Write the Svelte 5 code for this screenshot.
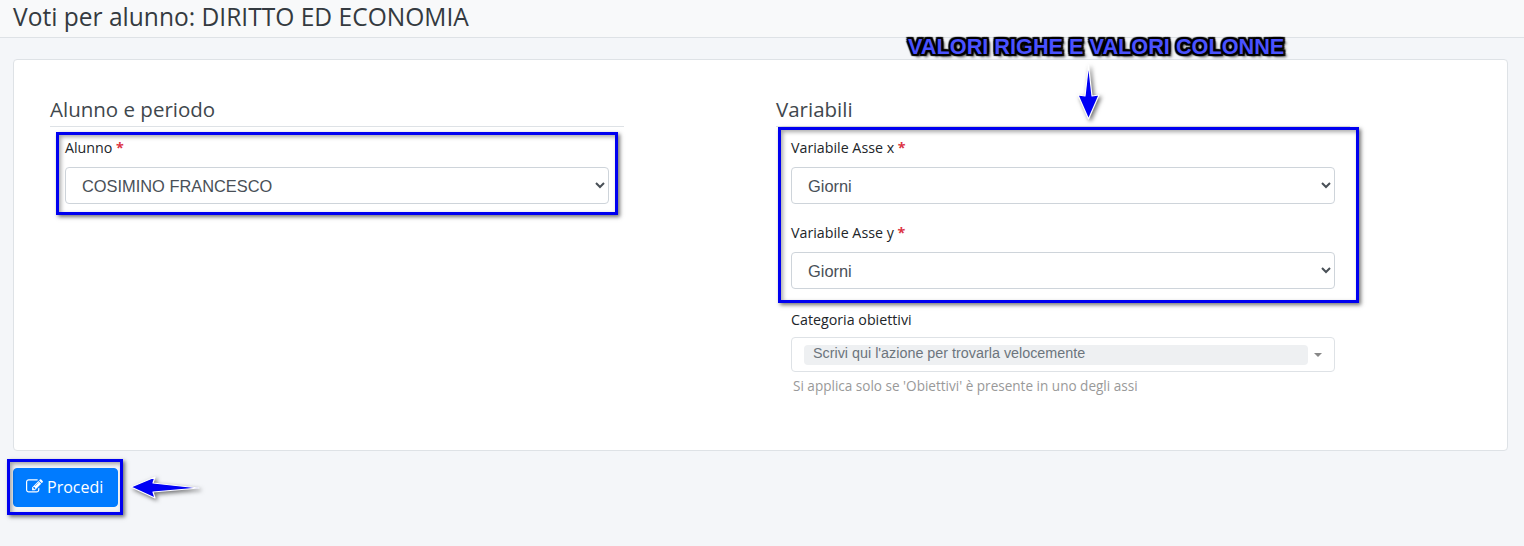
<script>
  const pencil = "M888 1184l116-116-152-152-116 116v56h96v96h56zm440-720q-16-16-33 1l-350 350q-17 17-1 33t33-1l350-350q17-17 1-33zm80 594v190q0 119-84.5 203.5t-203.5 84.5h-832q-119 0-203.5-84.5t-84.5-203.5v-832q0-119 84.5-203.5t203.5-84.5h832q63 0 117 25 15 7 18 23 3 17-9 29l-49 49q-14 14-32 8-23-6-45-6h-832q-66 0-113 47t-47 113v832q0 66 47 113t113 47h832q66 0 113-47t47-113v-126q0-13 9-22l64-64q15-15 35-7t20 29zm-96-738l288 288-672 672h-288v-288zm444 132l-92 92-288-288 92-92q28-28 68-28t68 28l152 152q28 28 28 68t-28 68z";
</script>

<div class="page">
  <header class="topbar"><h1>Voti per alunno: DIRITTO ED ECONOMIA</h1></header>

  <main class="content">
    <section class="card">
      <div class="col">
        <h2>Alunno e periodo</h2>
        <div class="field first">
          <label for="a">Alunno <span class="req">*</span></label>
          <select id="a"><option>COSIMINO FRANCESCO</option></select>
        </div>
      </div>
      <div class="col">
        <h2>Variabili</h2>
        <div class="field first">
          <label for="x">Variabile Asse x <span class="req">*</span></label>
          <select id="x"><option>Giorni</option></select>
        </div>
        <div class="field second">
          <label for="y">Variabile Asse y <span class="req">*</span></label>
          <select id="y"><option>Giorni</option></select>
        </div>
        <div class="field third">
          <span class="lab">Categoria obiettivi</span>
          <div class="multi">
            <span class="chip">Scrivi qui l'azione per trovarla velocemente</span>
            <i class="caret"></i>
          </div>
          <small>Si applica solo se 'Obiettivi' è presente in uno degli assi</small>
        </div>
      </div>
    </section>

    <button class="go">
      <svg viewBox="0 0 1792 1792" width="17" height="17" aria-hidden="true"><path fill="#fff" d={pencil}/></svg>
      Procedi
    </button>
  </main>

  <div class="hl h1"></div>
  <div class="hl h2"></div>
  <div class="hl h3"></div>

  <div class="note">VALORI RIGHE E VALORI COLONNE</div>

  <svg class="arrow down" width="30" height="64" viewBox="0 0 30 64" aria-hidden="true">
    <path d="M13.5 2 L17 33 L24 32 L13.5 56 L3 32 L10 33 Z" fill="#0000f5" stroke="#fff" stroke-width="1.2" stroke-linejoin="round"/>
  </svg>
  <svg class="arrow left" width="76" height="30" viewBox="0 0 76 30" aria-hidden="true">
    <path d="M2 14 L26 4 L24 10 L70 15 L24 19 L26 25 Z" fill="#0000f5" stroke="#fff" stroke-width="1.2" stroke-linejoin="round"/>
  </svg>
</div>

<style>
  :global(body) { margin: 0; background: #f4f6f9; }
  .page {
    position: relative;
    width: 1524px;
    height: 546px;
    overflow: hidden;
    background: #f4f6f9;
    font-family: "Open Sans", sans-serif;
    color: #343a40;
  }
  .topbar {
    box-sizing: border-box;
    height: 38px;
    padding: 0 13px;
    background: #f8f9fa;
    border-bottom: 1px solid #dee2e6;
  }
  h1 {
    margin: 0;
    font-size: 24.55px;
    font-weight: 400;
    line-height: 33px;
    color: #343a40;
  }
  .content { padding: 21px 16px 0 13px; }
  .card {
    box-sizing: border-box;
    height: 392px;
    padding: 37px 36px 0;
    display: flex;
    gap: 152px;
    background: #fff;
    border: 1px solid #dee2e6;
    border-radius: 4px;
  }
  .col { width: 574px; }
  h2 {
    margin: 0;
    height: 29px;
    font-size: 20.5px;
    font-weight: 400;
    line-height: 25px;
    border-bottom: 1px solid #dee2e6;
    color: #40474d;
  }
  .field { padding: 0 15px; }
  .field.first { margin-top: 11px; }
  .field.second { margin-top: 19px; }
  .field.third { margin-top: 21px; }
  label, .lab {
    display: block;
    height: 20px;
    margin-bottom: 9px;
    font-size: 14.25px;
    font-weight: 500;
    line-height: 20px;
    color: #212529;
  }
  .lab { margin-bottom: 7px; }
  .req { color: #dc3545; font-weight: 700; }
  select {
    display: block;
    box-sizing: border-box;
    width: 100%;
    height: 37px;
    padding: 5px 12px;
    background: #fff;
    border: 1px solid #ced4da;
    border-radius: 4px;
    font-family: "Liberation Sans", sans-serif;
    font-size: 16.4px;
    color: #495057;
  }
  .multi {
    box-sizing: border-box;
    height: 35px;
    padding: 6px 12px;
    display: flex;
    align-items: center;
    gap: 6px;
    border: 1px solid #dee2e6;
    border-radius: 4px;
  }
  .chip {
    flex: 1;
    height: 20px;
    padding-left: 9px;
    background: #eef0f2;
    border-radius: 4px;
    font-family: "Liberation Sans", sans-serif;
    font-size: 14.35px;
    line-height: 16px;
    color: #6c757d;
  }
  .caret {
    width: 0;
    height: 0;
    border: 4px solid transparent;
    border-top: 4px solid #888;
    border-bottom: 0;
  }
  small {
    display: block;
    margin: 5px 0 0 2px;
    font-size: 13.55px;
    line-height: 18px;
    color: #999;
  }
  .go {
    display: flex;
    align-items: center;
    gap: 4px;
    box-sizing: border-box;
    width: 105px;
    height: 39px;
    margin-top: 17px;
    padding: 0 0 2px 12px;
    background: #007bff;
    border: 1px solid #007bff;
    border-radius: 4px;
    font-family: "Open Sans", sans-serif;
    font-size: 16px;
    font-weight: 500;
    color: #fff;
  }
  .hl {
    position: absolute;
    box-sizing: border-box;
    border: 3px solid #0000f0;
    box-shadow: 2px 2px 4px rgba(0,0,0,.55), inset 2px 2px 4px rgba(0,0,0,.35);
    pointer-events: none;
  }
  .h1 { left: 56px; top: 132px; width: 562px; height: 83px; }
  .h2 { left: 778px; top: 127px; width: 581px; height: 176px; }
  .h3 { left: 7px; top: 459px; width: 116px; height: 56px; }
  .note {
    position: absolute;
    left: 908px;
    top: 35px;
    font-family: "Liberation Sans", sans-serif;
    font-weight: 700;
    font-size: 21.7px;
    line-height: 24px;
    white-space: nowrap;
    color: #4a52ff;
    text-shadow:
      2px 0 1px #000, -2px 0 1px #000, 0 2px 1px #000, 0 -2px 1px #000,
      2px 2px 1px #000, -2px 2px 1px #000, 2px -2px 1px #000, -2px -2px 1px #000,
      3px 3px 3px rgba(0,0,0,.7);
  }
  .arrow { position: absolute; filter: drop-shadow(2px 2px 2px rgba(0,0,0,.55)); }
  .down { left: 1075px; top: 63px; }
  .left { left: 129px; top: 473px; }
</style>
